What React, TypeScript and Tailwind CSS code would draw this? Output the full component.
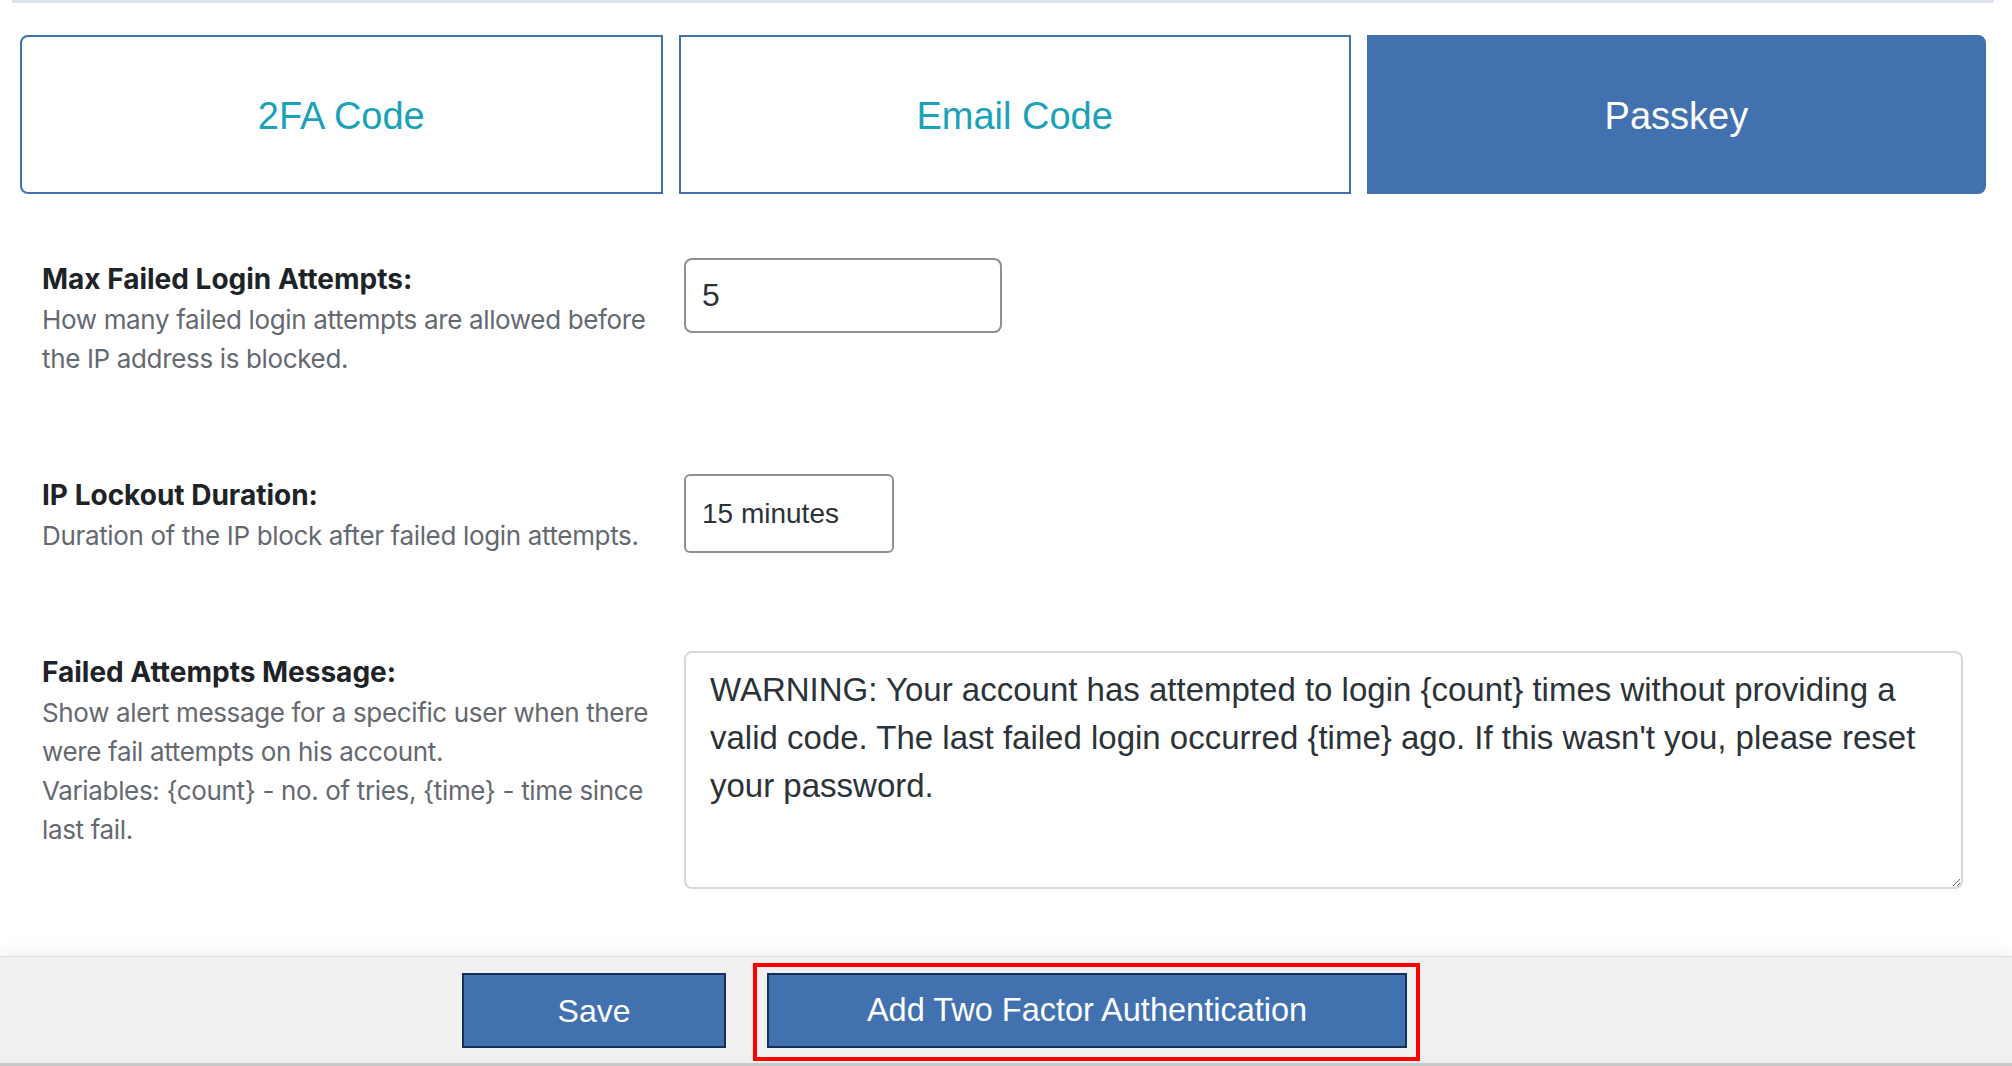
import { useState } from "react";

const tabs = ["2FA Code", "Email Code", "Passkey"];

const message =
  "WARNING: Your account has attempted to login {count} times without providing a valid code. The last failed login occurred {time} ago. If this wasn't you, please reset your password.";

function FieldLabel({ title, children }: { title: string; children: React.ReactNode }) {
  return (
    <div className="pr-[20px] font-['Inter',sans-serif]">
      <div className="text-[28px] leading-[42px] font-bold text-[#1d2327]">{title}</div>
      <div className="text-[26px] leading-[39px] tracking-[-0.35px] text-[#646970]">{children}</div>
    </div>
  );
}

export default function App() {
  const [active, setActive] = useState(2);

  return (
    <div className="min-h-screen bg-white font-['Liberation_Sans',Arial,sans-serif]">
      <div className="ml-[12px] mr-[18px] h-[3px] bg-[#dce3ed]" />

      {/* method tabs */}
      <div className="ml-[20px] mr-[26px] mt-[32px] flex gap-4">
        {tabs.map((t, i) => (
          <button
            key={t}
            onClick={() => setActive(i)}
            className={
              "flex-auto h-[159px] pt-[4px] border-2 border-[#4172af] text-[38px] " +
              (i === 0 ? "rounded-l-[8px] " : "") +
              (i === tabs.length - 1 ? "rounded-r-[8px] " : "") +
              (active === i ? "bg-[#4172af] text-white" : "bg-white text-[#1aa2b8]")
            }
          >
            {t}
          </button>
        ))}
      </div>

      <div className="ml-[42px] mr-[49px] mt-[16px] pb-[19px]">
        <div className="grid grid-cols-[642px_1fr] py-[48px]">
          <FieldLabel title="Max Failed Login Attempts:">
            How many failed login attempts are allowed before the IP address is blocked.
          </FieldLabel>
          <div>
            <input
              type="text"
              defaultValue="5"
              className="w-[318px] h-[75px] rounded-[8px] border-2 border-[#8c8f94] pl-[16px] text-[32px] text-[#2c3338] outline-none"
            />
          </div>
        </div>

        <div className="grid grid-cols-[642px_1fr] py-[48px]">
          <FieldLabel title="IP Lockout Duration:">
            Duration of the IP block after failed login attempts.
          </FieldLabel>
          <div>
            <input
              type="text"
              defaultValue="15 minutes"
              className="w-[210px] h-[79px] rounded-[6px] border-2 border-[#8c8f94] pl-[16px] text-[28px] text-[#2c3338] outline-none"
            />
          </div>
        </div>

        <div className="grid grid-cols-[642px_1fr] py-[48px]">
          <FieldLabel title="Failed Attempts Message:">
            <p>Show alert message for a specific user when there were fail attempts on his account.</p>
            <p>Variables: {"{count}"} - no. of tries, {"{time}"} - time since last fail.</p>
          </FieldLabel>
          <div>
            <textarea
              defaultValue={message}
              className="block w-full h-[238px] rounded-[8px] border-2 border-[#d3d8df] pt-[13px] pl-[24px] pr-[8px] text-[33px] leading-[48px] text-[#2c3338] outline-none"
            />
          </div>
        </div>
      </div>

      {/* footer actions */}
      <div className="flex items-start h-[110px] bg-[#f0f0f1] border-t border-[#dcdcde] border-b-[3px] border-b-[#c8c8ca] shadow-[0_-6px_14px_rgba(0,0,0,0.05)] pl-[462px]">
        <button className="mt-[16px] w-[264px] h-[75px] bg-[#4172af] border-2 border-[#14315a] text-white text-[32px]">
          Save
        </button>
        <div className="ml-[27px] mt-[6px] border-4 border-[#ff0000] pl-[10px] pr-[9px] pt-[6px] pb-[9px]">
          <button className="w-[640px] h-[75px] bg-[#4172af] border-2 border-[#14315a] text-white text-[32.5px]">
            Add Two Factor Authentication
          </button>
        </div>
      </div>
    </div>
  );
}
